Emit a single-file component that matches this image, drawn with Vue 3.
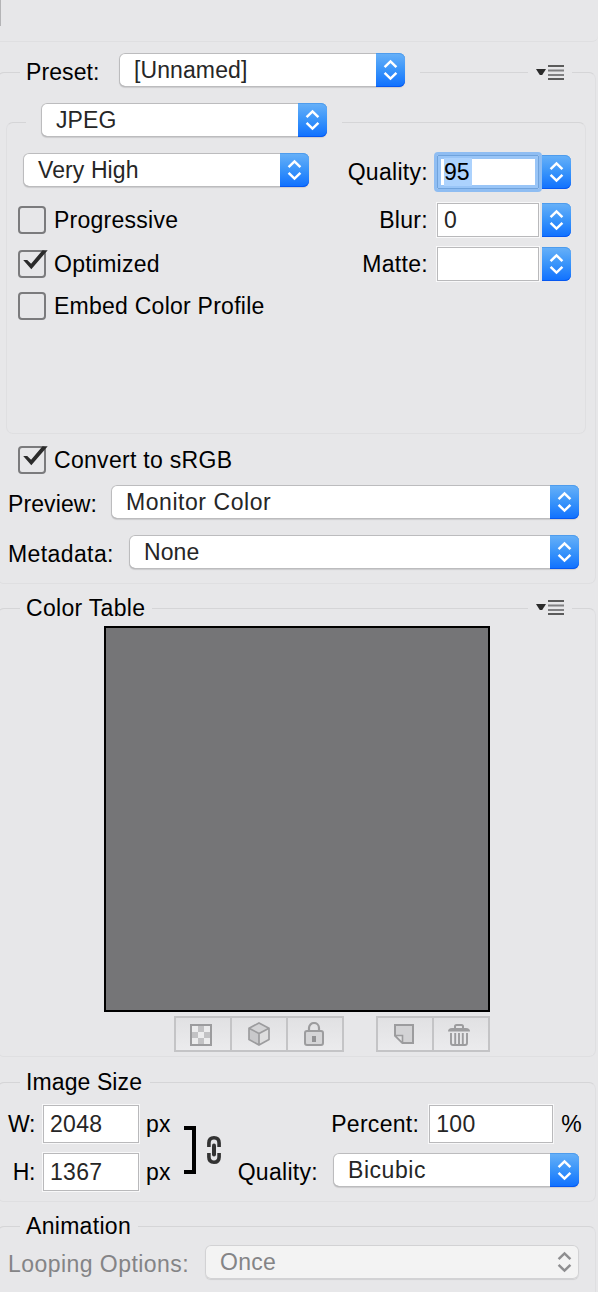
<script setup>
import { ref, reactive, h } from "vue";

const settings = reactive({
  preset: "[Unnamed]",
  format: "JPEG",
  compression: "Very High",
  preview: "Monitor Color",
  metadata: "None",
  resample: "Bicubic",
  looping: "Once",
});

const options = reactive([
  { name: "Progressive", checked: false },
  { name: "Optimized", checked: true },
  { name: "Embed Color Profile", checked: false },
]);

const amounts = [
  { label: "Quality:", value: "95", focused: true },
  { label: "Blur:", value: "0" },
  { label: "Matte:", value: "" },
];

const convert = ref(true);

// up and down chevrons at the right end of a popup
const Arrows = () =>
  h("svg", { width: 29, height: 34, viewBox: "0 0 29 34" }, [
    h("path", {
      d: "M8.6 14.2 L14.5 8.4 L20.4 14.2 M8.6 19.8 L14.5 25.6 L20.4 19.8",
      fill: "none",
      stroke: "currentColor",
      "stroke-width": 2.5,
    }),
  ]);

const MenuIcon = () =>
  h("svg", { width: 28, height: 16, viewBox: "0 0 28 16" }, [
    h("path", { d: "M0 4h10L6.2 10H3.8z", fill: "#2b2b2b" }),
    h("path", { d: "M12 1h16M12 14h16", stroke: "#5b5b5b", "stroke-width": 2 }),
    h("path", { d: "M12 5.500h16M12 10h16", stroke: "#808082", "stroke-width": 2 }),
  ]);

const CheckMark = () =>
  h("svg", { width: 32, height: 28, viewBox: "0 0 32 28" }, [
    h("path", {
      d: "M5.2 10h4l3.900 3.800L24.500.2h5.200L13.300 19.200z",
      fill: "#2b2b2b",
    }),
  ]);
</script>

<template>
  <div class="panel">
    <div class="stub"><div class="stub-line"></div></div>

    <section class="group preset-group">
      <div class="header">
        <div class="legend">
          <span class="label preset-label">Preset:</span>
          <div class="select tight">
            <span>{{ settings.preset }}</span>
            <div class="arrows"><Arrows /></div>
          </div>
        </div>
        <div class="menu low"><MenuIcon /></div>
      </div>

      <div class="format-group">
        <div class="format-legend">
          <div class="select tight">
            <span>{{ settings.format }}</span>
            <div class="arrows"><Arrows /></div>
          </div>
        </div>
        <div class="columns">
          <div class="left">
            <div class="select tight">
              <span>{{ settings.compression }}</span>
              <div class="arrows"><Arrows /></div>
            </div>
            <div
              v-for="option in options"
              :key="option.name"
              class="check-row"
              @click="option.checked = !option.checked"
            >
              <div class="box"><CheckMark v-if="option.checked" /></div>
              <span>{{ option.name }}</span>
            </div>
          </div>
          <div class="right">
            <div v-for="item in amounts" :key="item.label" class="amount">
              <span>{{ item.label }}</span>
              <div class="field" :class="{ focused: item.focused }">
                <span>{{ item.value }}</span>
              </div>
              <div class="arrows"><Arrows /></div>
            </div>
          </div>
        </div>
      </div>

      <div class="check-row convert" @click="convert = !convert">
        <div class="box"><CheckMark v-if="convert" /></div>
        <span>Convert to sRGB</span>
      </div>
      <div class="row">
        <span class="label preview-label">Preview:</span>
        <div class="select grow">
          <span>{{ settings.preview }}</span>
          <div class="arrows"><Arrows /></div>
        </div>
      </div>
      <div class="row">
        <span class="label metadata-label">Metadata:</span>
        <div class="select grow metadata">
          <span>{{ settings.metadata }}</span>
          <div class="arrows"><Arrows /></div>
        </div>
      </div>
    </section>

    <section class="group table-group">
      <div class="header">
        <div class="legend title table-title">Color Table</div>
        <div class="menu"><MenuIcon /></div>
      </div>
      <div class="swatch"></div>
      <div class="tools">
        <div class="tool-set">
          <button class="transparency">
            <svg width="22" height="22" viewBox="0 0 22 22">
              <path d="M1 1h20v20H1z" fill="#ececed" stroke="#9c9c9e" stroke-width="2" />
              <path
                d="M8 2h6v6H8zM2 8h6v6H2zM14 8h6v6h-6zM8 14h6v6H8z"
                fill="#c2c2c4"
              />
            </svg>
          </button>
          <button class="cube">
            <svg width="22" height="24" viewBox="0 0 22 24">
              <path d="M11 1 21 6.2 11 11.5 1 6.2z" fill="#d3d3d5" />
              <path d="M1 6.2 11 11.5V23L1 17.5z" fill="#c9c9cb" />
              <path d="M21 6.2 11 11.5V23l10-5.5z" fill="#dededf" />
              <path
                d="M11 1 21 6.2v11.3L11 23 1 17.5V6.2zM1 6.2l10 5.3 10-5.3M11 11.5V23"
                fill="none"
                stroke="#9c9c9e"
                stroke-width="1.7"
              />
            </svg>
          </button>
          <button>
            <svg width="20" height="24" viewBox="0 0 20 24">
              <path d="M5 10V6a5 5 0 0 1 10 0v4" fill="none" stroke="#9c9c9e" stroke-width="2.2" />
              <rect x="1" y="9" width="18" height="14" rx="2" fill="#d5d5d7" stroke="#9c9c9e" stroke-width="2" />
              <path d="M8 14h4v6H8z" fill="#929294" />
            </svg>
          </button>
        </div>
        <div class="tool-set">
          <button>
            <svg width="20" height="20" viewBox="0 0 20 20">
              <path d="M1 1h18v18H8.5L1 11.5z" fill="#d3d3d5" stroke="#9c9c9e" stroke-width="2" />
              <path d="M1 11.5h7.500V19z" fill="#e2e2e3" stroke="#9c9c9e" stroke-width="1.6" />
            </svg>
          </button>
          <button class="trash">
            <svg width="22" height="22" viewBox="0 0 22 22">
              <path d="M7 4.5V2.500Q7 1 8.500 1h5Q15 1 15 2.500v2" fill="none" stroke="#9c9c9e" stroke-width="2" />
              <path d="M0 7.500Q0 4 4 4h14q4 0 4 3.500z" fill="#9c9c9e" />
              <path
                d="M3 9v10q0 2 2 2h12q2 0 2-2V9M7.200 9v12M11 9v12M14.800 9v12"
                fill="none"
                stroke="#9c9c9e"
                stroke-width="1.9"
              />
            </svg>
          </button>
        </div>
      </div>
    </section>

    <section class="group size-group">
      <div class="header"><div class="legend title size-title">Image Size</div></div>
      <div class="size">
        <div class="dimensions">
          <div class="dimension">
            <span class="axis">W:</span>
            <div class="field tall"><span>2048</span></div>
            <span>px</span>
          </div>
          <div class="dimension">
            <span class="axis">H:</span>
            <div class="field tall"><span>1367</span></div>
            <span>px</span>
          </div>
        </div>
        <div class="bracket"></div>
        <svg class="link" width="16" height="30" viewBox="0 0 16 30">
          <path
            d="M2.900 12V8Q2.900 2.800 8 2.800T13.100 8v4M2.900 18v4Q2.900 27.200 8 27.200T13.100 22v-4"
            fill="none"
            stroke="#333"
            stroke-width="3.6"
          />
          <path d="M8 10.500v9" stroke="#333" stroke-width="4" stroke-linecap="round" />
        </svg>
        <div class="scaling">
          <div class="percent">
            <span>Percent:</span>
            <div class="field tall wide"><span>100</span></div>
            <span>%</span>
          </div>
          <div class="resample">
            <span class="label">Quality:</span>
            <div class="select">
              <span>{{ settings.resample }}</span>
              <div class="arrows"><Arrows /></div>
            </div>
          </div>
        </div>
      </div>
    </section>

    <section class="group animation-group">
      <div class="header"><div class="legend title animation-title">Animation</div></div>
      <div class="row looping">
        <span class="label looping-label">Looping Options:</span>
        <div class="select grow disabled">
          <span>{{ settings.looping }}</span>
          <div class="arrows"><Arrows /></div>
        </div>
      </div>
    </section>
  </div>
</template>

<style>
body {
  background: #e7e7e9;
}
</style>

<style scoped>
* {
  box-sizing: border-box;
}
.panel {
  width: 598px;
  height: 1292px;
  overflow: hidden;
  background: #e7e7e9;
  font-family: "Liberation Sans", Arial, sans-serif;
  font-size: 23px;
  line-height: 26px;
  letter-spacing: 0.3px;
  white-space: nowrap;
  color: #000;
}
svg {
  display: block;
  flex: none;
}
.stub {
  height: 42px;
  border-bottom: 1px solid #dfdfe1;
  border-bottom-right-radius: 6px;
}
.stub-line {
  width: 1px;
  height: 26px;
  background: #b4b4b6;
}
.group {
  width: 599px;
  margin-left: -3px;
  padding-left: 2px;
  border: 1px solid #dfdfe1;
  border-top-color: #d5d5d7;
  border-radius: 7px;
}
.preset-group {
  height: 512px;
  margin-top: 30px;
}
.table-group {
  height: 449px;
  margin-top: 24px;
}
.size-group {
  height: 120px;
  margin-top: 25px;
}
.animation-group {
  height: 90px;
  margin-top: 24px;
}
.header {
  display: flex;
  justify-content: space-between;
  align-items: center;
  height: 34px;
  margin-top: -20px;
  padding: 0 23px 0 20px;
}
.table-group .header,
.size-group .header,
.animation-group .header {
  height: 30px;
  margin-top: -16px;
}
.legend {
  display: flex;
  align-items: center;
  padding: 0 15px 0 6px;
  background: #e7e7e9;
}
.title {
  padding-right: 0;
}
.table-title {
  width: 132px;
}
.size-title {
  width: 130px;
  letter-spacing: 0.1px;
}
.animation-title {
  width: 118px;
}
.menu {
  width: 44px;
  padding-left: 8px;
  background: #e7e7e9;
}
.menu.low {
  padding-top: 6px;
}
.label {
  flex: none;
  padding-top: 4px;
}
.preset-label {
  width: 93px;
  letter-spacing: 0.1px;
}
.select {
  display: flex;
  justify-content: space-between;
  align-items: center;
  width: 286px;
  height: 34px;
  padding-left: 15px;
  border-radius: 6px;
  background: #fff;
  color: #262626;
  letter-spacing: 0.55px;
  box-shadow: inset 0 0 0 1px #bcbcbe, inset 0 -1px 0 #a5a5a7, 0 1px 1px rgba(0, 0, 0, 0.12);
}
.select.tight {
  letter-spacing: 0.1px;
}
.select.metadata {
  letter-spacing: 0.1px;
}
.arrows {
  flex: none;
  width: 29px;
  height: 34px;
  color: #fff;
  border-radius: 0 6px 6px 0;
  background: linear-gradient(#68b1f8, #3994fa 50%, #0f70ff);
  box-shadow: inset 0 1px 0 #4e9ced, inset 0 -1px 0 #0758f0;
}
.grow {
  flex: 1;
}
.format-group {
  width: 580px;
  height: 312px;
  margin: 35px 0 0 6px;
  border: 1px solid #dfdfe1;
  border-top-color: #d5d5d7;
  border-radius: 7px;
}
.format-legend {
  width: 316px;
  margin: -20px 0 0 19px;
  padding: 0 15px;
  background: #e7e7e9;
}
.columns {
  display: flex;
  justify-content: space-between;
  padding: 16px 14px 0 11px;
}
.left .select {
  margin: 0 0 19px 5px;
}
.check-row {
  display: flex;
  align-items: center;
  gap: 8px;
  height: 28px;
}
.left .check-row {
  letter-spacing: 0.25px;
}
.left .check-row + .check-row {
  margin-top: 16px;
}
.left .check-row + .check-row + .check-row {
  margin-top: 14px;
}
.box {
  flex: none;
  width: 28px;
  height: 28px;
  border: 2px solid #7b7b7d;
  border-radius: 4px;
}
.box svg {
  margin: -2px 0 0 -2px;
}
.right {
  padding-top: 2px;
}
.amount {
  display: flex;
  justify-content: flex-end;
  align-items: center;
  height: 34px;
  margin-bottom: 14px;
}
.amount + .amount {
  margin-bottom: 10px;
}
.field {
  display: flex;
  align-items: center;
  width: 102px;
  height: 34px;
  margin: 0 3px 0 9px;
  padding-left: 6px;
  border: 1px solid #b9b9bb;
  outline: 1px solid #f8f8f9;
  background: #fff;
  color: #262626;
}
.field.focused {
  z-index: 1;
  border: 1px solid #70a3dc;
  outline: 3px solid #8fbdf2;
  border-radius: 1px;
  box-shadow: inset 0 0 0 3px #99c5f7;
  color: #000;
}
.field.focused span {
  width: 28px;
  letter-spacing: 0;
  line-height: 28px;
  background: #acd2fd;
}
.convert {
  margin: 12px 0 11px 18px;
}
.row {
  display: flex;
  align-items: center;
  height: 34px;
  margin-bottom: 16px;
  padding: 0 16px 0 8px;
}
.preview-label {
  width: 103px;
  letter-spacing: 0.1px;
}
.metadata-label {
  width: 121px;
  letter-spacing: 0.4px;
}
.swatch {
  width: 386px;
  height: 386px;
  margin: 3px 0 4px 104px;
  border: 2px solid #000;
  background: #757577;
}
.tools {
  display: flex;
  gap: 32px;
  padding-left: 174px;
}
.tool-set {
  display: flex;
  border: 2px solid #c4c4c6;
}
button {
  display: flex;
  justify-content: center;
  align-items: center;
  width: 54px;
  height: 32px;
  padding: 0 2px 0 0;
  border: 0;
  background: linear-gradient(#e1e1e3, #ebebed);
}
button + button {
  width: 56px;
  border-left: 2px solid #c4c4c6;
}
button.transparency,
button.trash {
  padding: 2px 4px 0 0;
}
button.cube {
  padding: 0;
}
.size {
  display: flex;
  padding: 8px 16px 0 0;
}
.dimension {
  display: flex;
  align-items: center;
  height: 38px;
  margin-bottom: 10px;
}
.axis {
  width: 35px;
  text-align: right;
  letter-spacing: -0.4px;
}
.field.tall {
  width: 96px;
  height: 38px;
  margin: 0 7px 0 8px;
}
.bracket {
  width: 12px;
  height: 48px;
  margin: 21px 0 0 13px;
  border: 4px solid #000;
  border-left: 0;
}
.link {
  margin: 30px 0 0 10px;
}
.scaling {
  flex: 1;
}
.percent {
  display: flex;
  justify-content: flex-end;
  align-items: center;
  height: 38px;
  margin: 0 -3px 10px 0;
}
.field.wide {
  width: 124px;
  margin: 0 8px 0 10px;
}
.resample {
  display: flex;
  justify-content: flex-end;
  align-items: center;
  gap: 15px;
}
.resample .select {
  width: 246px;
}
.looping {
  margin-top: 4px;
}
.looping-label {
  width: 197px;
  color: #848486;
  letter-spacing: 0.45px;
}
.disabled {
  color: #848486;
  background: #f3f3f3;
  letter-spacing: 0.3px;
  box-shadow: inset 0 0 0 1px #d2d2d4, 0 1px 1px rgba(0, 0, 0, 0.1);
}
.disabled .arrows {
  color: #8e8e90;
  background: none;
  box-shadow: none;
}
</style>
